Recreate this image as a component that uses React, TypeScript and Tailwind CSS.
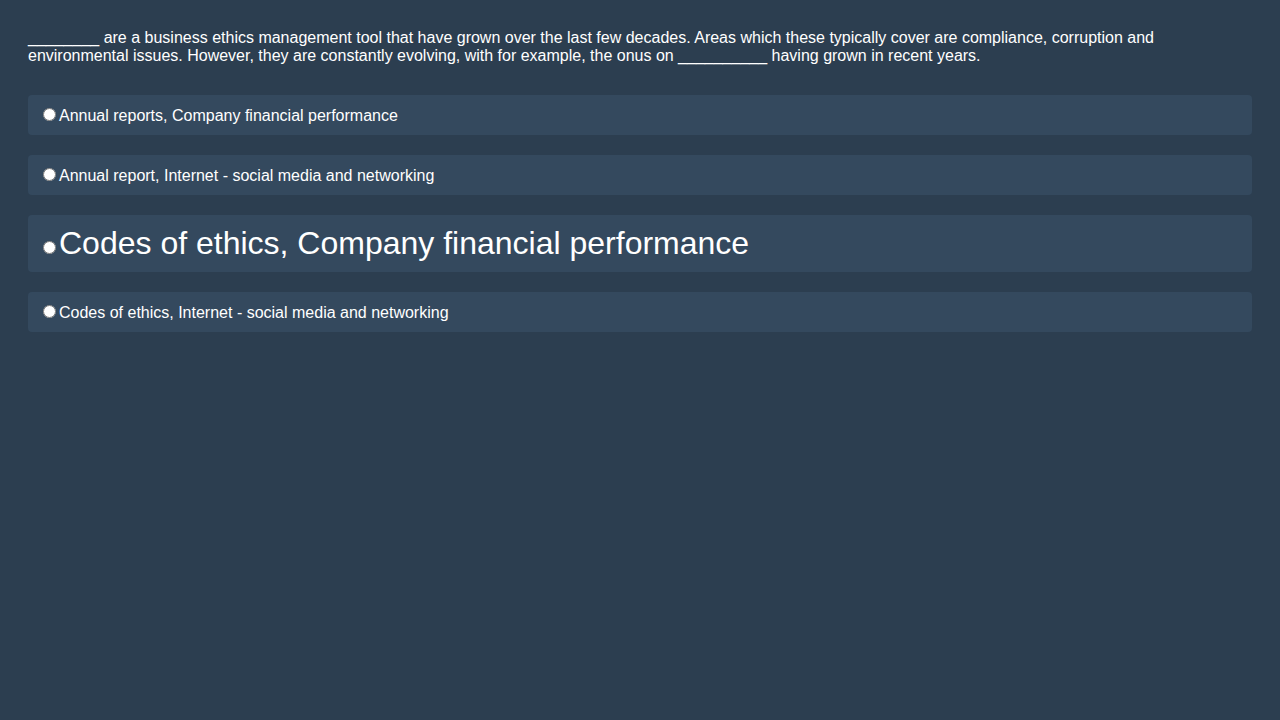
const options = [
  { text: 'Annual reports, Company financial performance', big: false },
  { text: 'Annual report, Internet - social media and networking', big: false },
  { text: 'Codes of ethics, Company financial performance', big: true },
  { text: 'Codes of ethics, Internet - social media and networking', big: false },
]

export default function App() {
  return (
    <div className="min-h-[720px] bg-[#2c3e50] px-[28px] pt-[29px] text-white font-['Liberation_Sans',Arial,sans-serif]">
      <p className="text-[16px] leading-[18px] mb-[30px]">
        ________ are a business ethics management tool that have grown over the last few decades. Areas which these
        typically cover are compliance, corruption and environmental issues. However, they are constantly evolving, with
        for example, the onus on __________ having grown in recent years.
      </p>

      <div className="flex flex-col gap-[20px]">
        {options.map((opt, idx) => (
          <label
            key={idx}
            className={
              opt.big
                ? 'block bg-[#34495e] rounded-[4px] px-[15px] pt-[10px] pb-[10px] text-[32px] leading-[37px]'
                : 'block bg-[#34495e] rounded-[4px] px-[15px] pt-[11px] pb-[9px] text-[16px] leading-[20px]'
            }
          >
            <input type="radio" name="answer" className="mr-[3px] w-[13px] h-[13px]" />
            {opt.text}
          </label>
        ))}
      </div>
    </div>
  )
}
